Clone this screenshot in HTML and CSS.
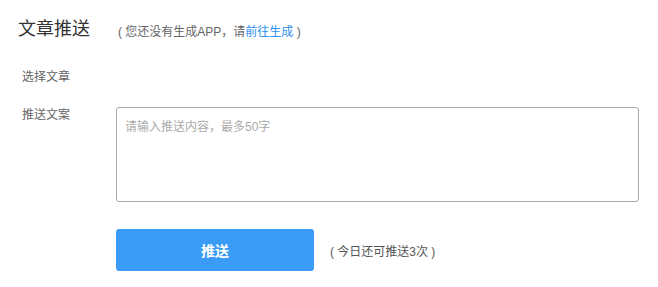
FILE: index.html
```html
<!DOCTYPE html>
<html lang="zh-CN">
<head>
    <meta charset="UTF-8">
    <title>文章推送</title>
    <link rel="stylesheet" href="styles.css">
</head>
<body>
    <div class="page">
        <!-- Title -->
        <div class="title-row">
            <h2 class="title">文章推送</h2>
            <span class="tip">( 您还没有生成APP，请<a href="#" class="link">前往生成</a> )</span>
        </div>

        <!-- Form -->
        <div class="form-row first">
            <label class="label">选择文章</label>
            <div class="field"></div>
        </div>

        <div class="form-row">
            <label class="label">推送文案</label>
            <div class="field">
                <textarea class="content" placeholder="请输入推送内容，最多50字"></textarea>
            </div>
        </div>

        <div class="form-row actions">
            <div class="label"></div>
            <div class="field">
                <button class="push-btn">推送</button>
                <span class="count">( 今日还可推送3次 )</span>
            </div>
        </div>
    </div>
</body>
</html>
```

FILE: styles.css
```css
body {
    margin: 0;
    padding: 0;
    background-color: #fff;
    font-family: "Helvetica Neue", "Liberation Sans", "Noto Sans CJK SC", sans-serif;
    color: #666;
}
.page {
    padding: 19px 0 0 18px;
}
.title-row {
    display: flex;
    align-items: center;
    height: 20px;
}
.title {
    margin: 0;
    font-size: 18px;
    font-weight: normal;
    color: #333;
    line-height: 20px;
}
.tip {
    margin-left: 28px;
    margin-top: 2px;
    font-size: 12px;
    color: #666;
}
.link {
    color: #2b8ff0;
    text-decoration: none;
}
.form-row {
    display: flex;
    align-items: flex-start;
    margin-top: 23px;
}
.form-row.first {
    margin-top: 31px;
}
.label {
    width: 98px;
    padding-left: 4px;
    box-sizing: border-box;
    font-size: 12px;
    line-height: 14px;
    color: #666;
    flex-shrink: 0;
}
.form-row + .form-row .label {
    padding-top: 1px;
}
.field {
    display: flex;
    align-items: center;
}
.content {
    width: 523px;
    height: 95px;
    box-sizing: border-box;
    border: 1px solid #aaa;
    border-radius: 3px;
    padding: 9px 8px;
    resize: none;
    font-family: inherit;
    font-size: 12px;
    color: #333;
    outline: none;
}
.content::placeholder {
    color: #aaa;
}
.form-row.actions {
    margin-top: 27px;
}
.push-btn {
    width: 198px;
    height: 42px;
    border: none;
    border-radius: 3px;
    background-color: #3a9cf6;
    color: #fff;
    font-family: inherit;
    font-size: 14px;
    font-weight: bold;
    cursor: pointer;
}
.count {
    margin-left: 16px;
    font-size: 12px;
    color: #555;
}
```
